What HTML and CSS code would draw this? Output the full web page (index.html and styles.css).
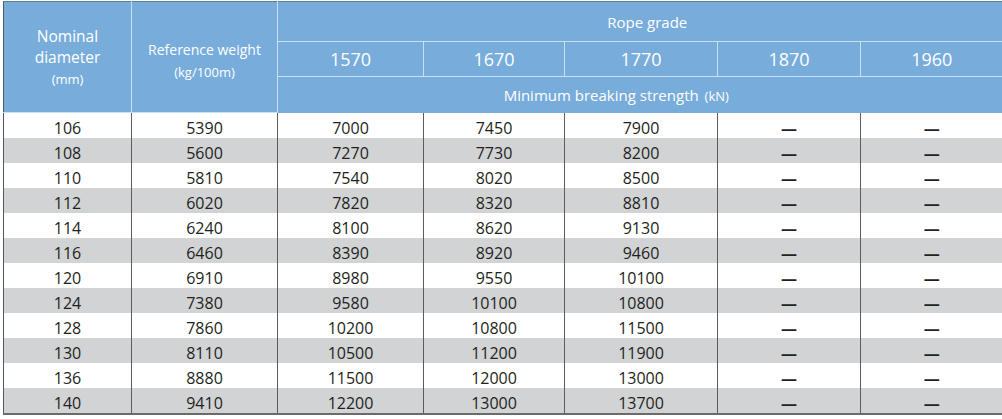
FILE: index.html
```html
<!DOCTYPE html>
<html>
<head>
<meta charset="utf-8">
<link rel="stylesheet" href="styles.css">
</head>
<body>
<table class="spec">
  <colgroup>
    <col class="c1"><col class="c2"><col class="c3"><col class="c4"><col class="c5"><col class="c6"><col class="c7">
  </colgroup>
  <thead>
    <tr class="h1">
      <th rowspan="3" class="stack">Nominal<br>diameter<br><span class="unit">(mm)</span></th>
      <th rowspan="3" class="stack2">Reference weight<br><span class="unit">(kg/100m)</span></th>
      <th colspan="5" class="grade">Rope grade</th>
    </tr>
    <tr class="h2">
      <th>1570</th><th>1670</th><th>1770</th><th>1870</th><th>1960</th>
    </tr>
    <tr class="h3">
      <th colspan="5" class="mbs">Minimum breaking strength <span class="unit">(kN)</span></th>
    </tr>
  </thead>
  <tbody>
    <tr><td>106</td><td>5390</td><td>7000</td><td>7450</td><td>7900</td><td class="dash">—</td><td class="dash">—</td></tr>
    <tr><td>108</td><td>5600</td><td>7270</td><td>7730</td><td>8200</td><td class="dash">—</td><td class="dash">—</td></tr>
    <tr><td>110</td><td>5810</td><td>7540</td><td>8020</td><td>8500</td><td class="dash">—</td><td class="dash">—</td></tr>
    <tr><td>112</td><td>6020</td><td>7820</td><td>8320</td><td>8810</td><td class="dash">—</td><td class="dash">—</td></tr>
    <tr><td>114</td><td>6240</td><td>8100</td><td>8620</td><td>9130</td><td class="dash">—</td><td class="dash">—</td></tr>
    <tr><td>116</td><td>6460</td><td>8390</td><td>8920</td><td>9460</td><td class="dash">—</td><td class="dash">—</td></tr>
    <tr><td>120</td><td>6910</td><td>8980</td><td>9550</td><td>10100</td><td class="dash">—</td><td class="dash">—</td></tr>
    <tr><td>124</td><td>7380</td><td>9580</td><td>10100</td><td>10800</td><td class="dash">—</td><td class="dash">—</td></tr>
    <tr><td>128</td><td>7860</td><td>10200</td><td>10800</td><td>11500</td><td class="dash">—</td><td class="dash">—</td></tr>
    <tr><td>130</td><td>8110</td><td>10500</td><td>11200</td><td>11900</td><td class="dash">—</td><td class="dash">—</td></tr>
    <tr><td>136</td><td>8880</td><td>11500</td><td>12000</td><td>13000</td><td class="dash">—</td><td class="dash">—</td></tr>
    <tr><td>140</td><td>9410</td><td>12200</td><td>13000</td><td>13700</td><td class="dash">—</td><td class="dash">—</td></tr>
  </tbody>
</table>
</body>
</html>
```
FILE: styles.css
```css
html, body {
  margin: 0;
  padding: 0;
  background: #ffffff;
}
body {
  padding: 1px 0 0 3px;
  font-family: "Open Sans", "Noto Sans", sans-serif;
}
.spec {
  border-collapse: collapse;
  table-layout: fixed;
  width: 999px;
  border-top: 1px solid #5a7d99;
  border-left: 1px solid #4d5a66;
  border-bottom: 2px solid #6b6b6b;
}
.c1 { width: 128px; }
.c2 { width: 146px; }
.c3 { width: 146px; }
.c4 { width: 141px; }
.c5 { width: 153px; }
.c6 { width: 143px; }
.c7 { width: 142px; }

thead th {
  background: #78acdb;
  color: #ffffff;
  font-weight: normal;
  text-align: center;
  border: 1px solid #c4e1f7;
  padding: 0;
}
thead tr:first-child th { border-top: none; }
thead th:last-child { border-right: none; }
.h1 { height: 40px; }
.h2 { height: 35px; }
.h3 { height: 36px; }
.h1 th { font-size: 15px; }
.h2 th { font-size: 18px; }
.h3 th { font-size: 15px; border-bottom: none; }
.h1 th.grade { padding-left: 14px; }
.h3 th.mbs { padding-right: 48px; }
.h1 th.stack { font-size: 15.5px; line-height: 21px; vertical-align: middle; border-left: none; padding-top: 1px; }
.h1 th.stack2 { font-size: 14px; line-height: 22px; vertical-align: middle; padding-top: 8px; }
.unit { font-size: 13px; }
.h3 .unit { font-size: 13px; margin-left: 2px; }

tbody tr { height: 25px; }
tbody td {
  padding: 5px 0 0;
  vertical-align: top;
  text-align: center;
  font-size: 16px;
  line-height: 20px;
  color: #231f20;
  border-left: 1px solid #5b5b5b;
  border-right: 1px solid #5b5b5b;
}
tbody td:first-child { border-left: none; }
tbody td:last-child { border-right: none; }
tbody tr:nth-child(even) td { background: #d1d3d4; }
tbody td.dash { font-weight: bold; font-size: 16px; }
```
